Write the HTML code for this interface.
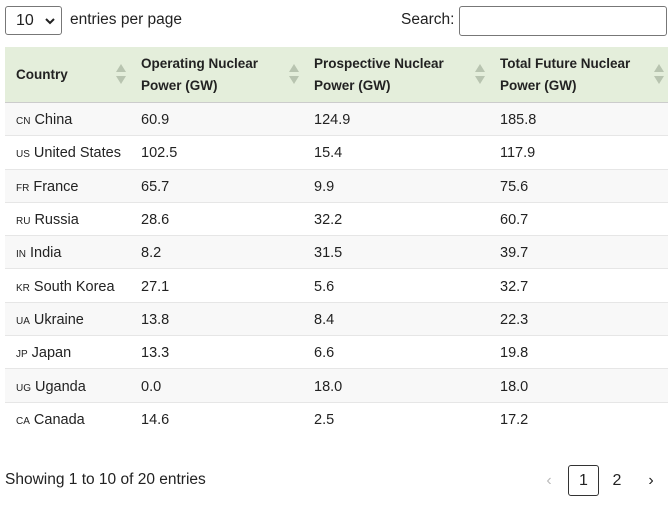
<!DOCTYPE html><html><head><style>
body{margin:0;font-family:"Liberation Sans",sans-serif;font-size:14.5px;color:#222;background:#fff;width:671px;height:508px;position:relative;overflow:hidden}
.sel{position:absolute;left:5px;top:6px;width:57px;height:29px;border:1px solid #777;border-radius:3px;box-sizing:border-box;font-size:16px;line-height:27px;padding-left:10px}
.sel svg{position:absolute;right:6px;top:11px}
.lbl{position:absolute;top:11px;font-size:15.5px}
.srch{position:absolute;left:459px;top:6px;width:208px;height:30px;border:1px solid #777;border-radius:3px;box-sizing:border-box}
table{position:absolute;left:5px;top:47px;width:663px;border-collapse:collapse}
th{background:#e4eedb;text-align:left;font-weight:bold;font-size:13.5px;line-height:22px;height:55px;padding:0 0 0 11px;position:relative;vertical-align:middle;border-bottom:1px solid #ccc}
th .s{position:absolute;right:3px;top:16px}
td{height:33.3px;padding:2px 0 0 11px;border-bottom:1px solid #e6e6e6;font-size:14.5px;box-sizing:border-box}
tr:nth-child(even) td{background:#f8f8f8}
tr:last-child td{border-bottom:none}
.f{font-size:10px;margin-right:4px}
.foot{position:absolute;left:5px;top:471px;font-size:15.5px}
.pg{position:absolute;top:465px;font-size:16px;height:31px;line-height:31px;text-align:center}
</style></head><body>
<div class="sel">10<svg width="10" height="7"><path d="M1 1l4 4 4-4" stroke="#222" stroke-width="2" fill="none"/></svg></div>
<div class="lbl" style="left:70px">entries per page</div>
<div class="lbl" style="left:401px">Search:</div>
<div class="srch"></div>
<table>
<tr><th style="width:114px">Country<svg class="s" width="12" height="22"><path d="M6 1L11 9H1Z M6 21L11 13H1Z" fill="#b8c4b0"/></svg></th>
<th style="width:162px">Operating Nuclear<br>Power (GW)<svg class="s" width="12" height="22"><path d="M6 1L11 9H1Z M6 21L11 13H1Z" fill="#b8c4b0"/></svg></th>
<th style="width:175px">Prospective Nuclear<br>Power (GW)<svg class="s" width="12" height="22"><path d="M6 1L11 9H1Z M6 21L11 13H1Z" fill="#b8c4b0"/></svg></th>
<th>Total Future Nuclear<br>Power (GW)<svg class="s" width="12" height="22"><path d="M6 1L11 9H1Z M6 21L11 13H1Z" fill="#b8c4b0"/></svg></th></tr>
<tr><td><span class="f">CN</span>China</td><td>60.9</td><td>124.9</td><td>185.8</td></tr>
<tr><td><span class="f">US</span>United States</td><td>102.5</td><td>15.4</td><td>117.9</td></tr>
<tr><td><span class="f">FR</span>France</td><td>65.7</td><td>9.9</td><td>75.6</td></tr>
<tr><td><span class="f">RU</span>Russia</td><td>28.6</td><td>32.2</td><td>60.7</td></tr>
<tr><td><span class="f">IN</span>India</td><td>8.2</td><td>31.5</td><td>39.7</td></tr>
<tr><td><span class="f">KR</span>South Korea</td><td>27.1</td><td>5.6</td><td>32.7</td></tr>
<tr><td><span class="f">UA</span>Ukraine</td><td>13.8</td><td>8.4</td><td>22.3</td></tr>
<tr><td><span class="f">JP</span>Japan</td><td>13.3</td><td>6.6</td><td>19.8</td></tr>
<tr><td><span class="f">UG</span>Uganda</td><td>0.0</td><td>18.0</td><td>18.0</td></tr>
<tr><td><span class="f">CA</span>Canada</td><td>14.6</td><td>2.5</td><td>17.2</td></tr>
</table>
<div class="foot">Showing 1 to 10 of 20 entries</div>
<div class="pg" style="left:540px;width:18px;color:#bbb">‹</div>
<div class="pg" style="left:568px;width:31px;border:1px solid #333;border-radius:3px;box-sizing:border-box;line-height:29px">1</div>
<div class="pg" style="left:607px;width:20px">2</div>
<div class="pg" style="left:642px;width:18px">›</div>
</body></html>
